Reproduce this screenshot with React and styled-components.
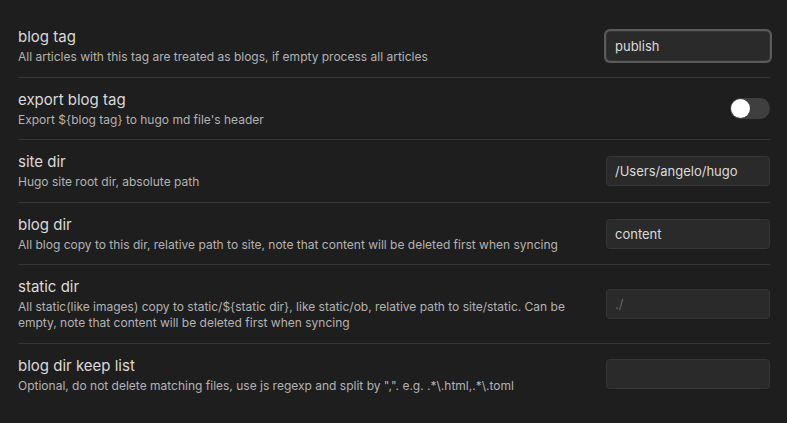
import React, { useState } from 'react';
import styled, { createGlobalStyle } from 'styled-components';

const GlobalStyle = createGlobalStyle`
	html, body {
		margin: 0;
		padding: 0;
		background: #1e1e1e;
	}
	body {
		font-family: Inter, "Noto Sans", sans-serif;
		-webkit-font-smoothing: antialiased;
	}
`;

const SETTINGS = [
	{
		name: 'blog tag',
		desc: 'All articles with this tag are treated as blogs, if empty process all articles',
		type: 'text',
		value: 'publish',
		focused: true,
	},
	{
		name: 'export blog tag',
		desc: "Export ${blog tag} to hugo md file's header",
		type: 'toggle',
	},
	{
		name: 'site dir',
		desc: 'Hugo site root dir, absolute path',
		type: 'text',
		value: '/Users/angelo/hugo',
	},
	{
		name: 'blog dir',
		desc: 'All blog copy to this dir, relative path to site, note that content will be deleted first when syncing',
		type: 'text',
		value: 'content',
	},
	{
		name: 'static dir',
		desc: 'All static(like images) copy to static/${static dir}, like static/ob, relative path to site/static. Can be empty, note that content will be deleted first when syncing',
		type: 'text',
		value: '',
		placeholder: './',
	},
	{
		name: 'blog dir keep list',
		desc: 'Optional, do not delete matching files, use js regexp and split by ",". e.g. .*\\.html,.*\\.toml',
		type: 'text',
		value: '',
	},
];

function SettingRow({ setting }) {
	const [value, setValue] = useState(setting.value || '');
	const [on, setOn] = useState(false);
	return (
		<Row>
			<Info>
				<Name>{setting.name}</Name>
				<Desc>{setting.desc}</Desc>
			</Info>
			<Control>
				{setting.type === 'toggle' ? (
					<Toggle $on={on} onClick={() => setOn(!on)}>
						<Knob />
					</Toggle>
				) : (
					<TextInput
						$focused={setting.focused}
						value={value}
						placeholder={setting.placeholder}
						onChange={(e) => setValue(e.target.value)}
					/>
				)}
			</Control>
		</Row>
	);
}

export default function App() {
	return (
		<>
			<GlobalStyle />
			<Page>
				{SETTINGS.map((s) => (
					<SettingRow key={s.name} setting={s} />
				))}
			</Page>
		</>
	);
}

const Page = styled.div`
	padding: 15px 17px 18px 18px;
	display: flex;
	flex-direction: column;
`;

const Row = styled.div`
	display: flex;
	align-items: center;
	padding: 12px 0;
	border-top: 1px solid #363636;
	&:first-child {
		border-top: none;
	}
`;

const Info = styled.div`
	flex: 1 1 auto;
	margin-right: 16px;
	min-width: 0;
`;

const Name = styled.div`
	color: #dadada;
	font-size: 15px;
	line-height: 20px;
`;

const Desc = styled.div`
	color: #b3b3b3;
	font-size: 12px;
	line-height: 15.6px;
	padding-top: 2px;
`;

const Control = styled.div`
	flex: 0 0 auto;
	display: flex;
	justify-content: flex-end;
	align-items: center;
`;

const TextInput = styled.input`
	box-sizing: border-box;
	width: 164px;
	height: 30px;
	padding: 0 8px;
	background: #2a2a2a;
	border: 1px solid #363636;
	border-radius: 4px;
	color: #dadada;
	font-family: Inter, "Noto Sans", sans-serif;
	font-size: 13px;
	outline: none;
	box-shadow: ${(p) => (p.$focused ? '0 0 0 2px #5a5a5a' : 'none')};
	&::placeholder {
		color: #666666;
	}
`;

const Toggle = styled.div`
	width: 40px;
	height: 21px;
	border-radius: 11px;
	background: ${(p) => (p.$on ? '#7f6df2' : '#3f3f3f')};
	display: flex;
	align-items: center;
	padding: 0 1px;
	box-sizing: border-box;
	justify-content: ${(p) => (p.$on ? 'flex-end' : 'flex-start')};
	cursor: pointer;
`;

const Knob = styled.div`
	width: 19px;
	height: 19px;
	border-radius: 50%;
	background: #ffffff;
`;
